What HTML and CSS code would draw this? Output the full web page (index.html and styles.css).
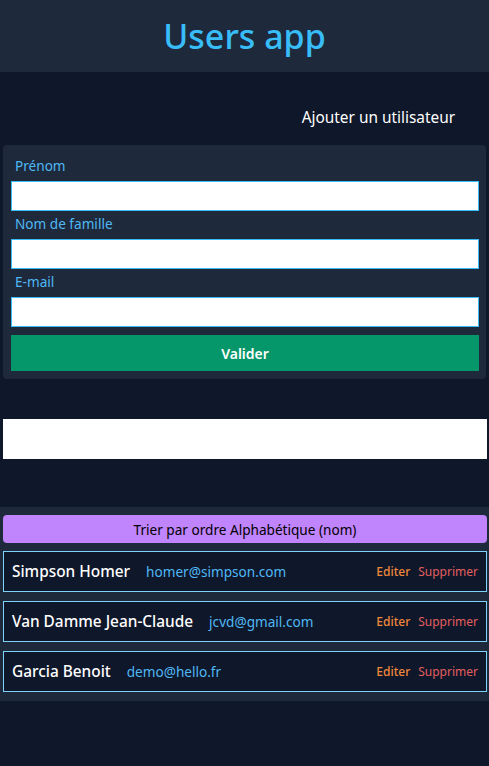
FILE: index.html
```html
<!DOCTYPE html>
<html lang="fr">
<head>
<meta charset="utf-8">
<title>Users app</title>
<link rel="stylesheet" href="styles.css">
</head>
<body>
<header class="top">
  <h1 class="title">Users app</h1>
</header>
<main class="main">
  <div class="add-row"><span class="add-link">Ajouter un utilisateur</span></div>
  <form class="card">
    <label class="label">Prénom</label>
    <input class="field" type="text">
    <label class="label">Nom de famille</label>
    <input class="field" type="text">
    <label class="label">E-mail</label>
    <input class="field" type="text">
    <button class="submit" type="button">Valider</button>
  </form>
  <div class="blank"></div>
</main>
<section class="list">
  <button class="sort" type="button">Trier par ordre Alphabétique (nom)</button>
  <div class="user">
    <span class="name">Simpson Homer</span>
    <span class="email">homer@simpson.com</span>
    <span class="actions"><span class="edit">Editer</span><span class="del">Supprimer</span></span>
  </div>
  <div class="user">
    <span class="name">Van Damme Jean-Claude</span>
    <span class="email">jcvd@gmail.com</span>
    <span class="actions"><span class="edit">Editer</span><span class="del">Supprimer</span></span>
  </div>
  <div class="user">
    <span class="name">Garcia Benoit</span>
    <span class="email">demo@hello.fr</span>
    <span class="actions"><span class="edit">Editer</span><span class="del">Supprimer</span></span>
  </div>
</section>
</body>
</html>
```
FILE: styles.css
```css
* { box-sizing: border-box; }
html, body { margin: 0; padding: 0; }
body {
  background: #0f172a;
  font-family: "Noto Sans", "Open Sans", sans-serif;
  color: #ffffff;
  min-height: 766px;
}
.top {
  background: #1e293b;
  height: 72px;
  display: flex;
  align-items: center;
  justify-content: center;
}
.title {
  margin: 0;
  font-size: 34px;
  font-weight: 500;
  color: #38bdf8;
}
.main { padding: 0 2px 0 3px; }
.add-row {
  display: flex;
  justify-content: flex-end;
  padding: 36px 32px 0 0;
  height: 73px;
}
.add-link { font-size: 15.4px; line-height: 20px; }
.card {
  background: #1e293b;
  border-radius: 4px;
  padding: 8px 7px 8px 8px;
  margin-right: 1px;
  display: flex;
  flex-direction: column;
}
.label {
  color: #4fb8f4;
  font-size: 13.6px;
  line-height: 18px;
  padding-left: 4px;
  margin-top: 4px;
  margin-bottom: 6px;
}
.field {
  height: 30px;
  border: 1px solid #38bdf8;
  background: #fff;
  margin: 0;
  padding: 0 6px;
}
.submit {
  margin-top: 8px;
  height: 36px;
  border: 0;
  background: #059669;
  color: #fff;
  font-family: inherit;
  font-size: 14px;
  font-weight: 600;
}
.blank {
  margin-top: 40px;
  height: 40px;
  background: #fff;
}
.list {
  margin-top: 48px;
  background: #1e293b;
  padding: 8px 2px 9px 3px;
  display: flex;
  flex-direction: column;
  gap: 9px;
}
.sort {
  height: 28px;
  border: 0;
  border-radius: 4px;
  background: #c084fc;
  color: #000;
  font-family: inherit;
  font-size: 13.6px;
  margin-bottom: -1px;
}
.user {
  height: 41px;
  border: 1px solid #7dd3fc;
  background: #0f172a;
  display: flex;
  align-items: center;
  padding: 0 8px 0 8px;
}
.name { font-size: 15.4px; font-weight: 500; }
.email { color: #4fb8f4; font-size: 13.6px; margin-left: 16px; }
.actions { margin-left: auto; display: flex; gap: 8px; font-size: 12px; }
.edit { color: #f0883a; font-weight: 500; }
.del { color: #e35f5f; }
```
